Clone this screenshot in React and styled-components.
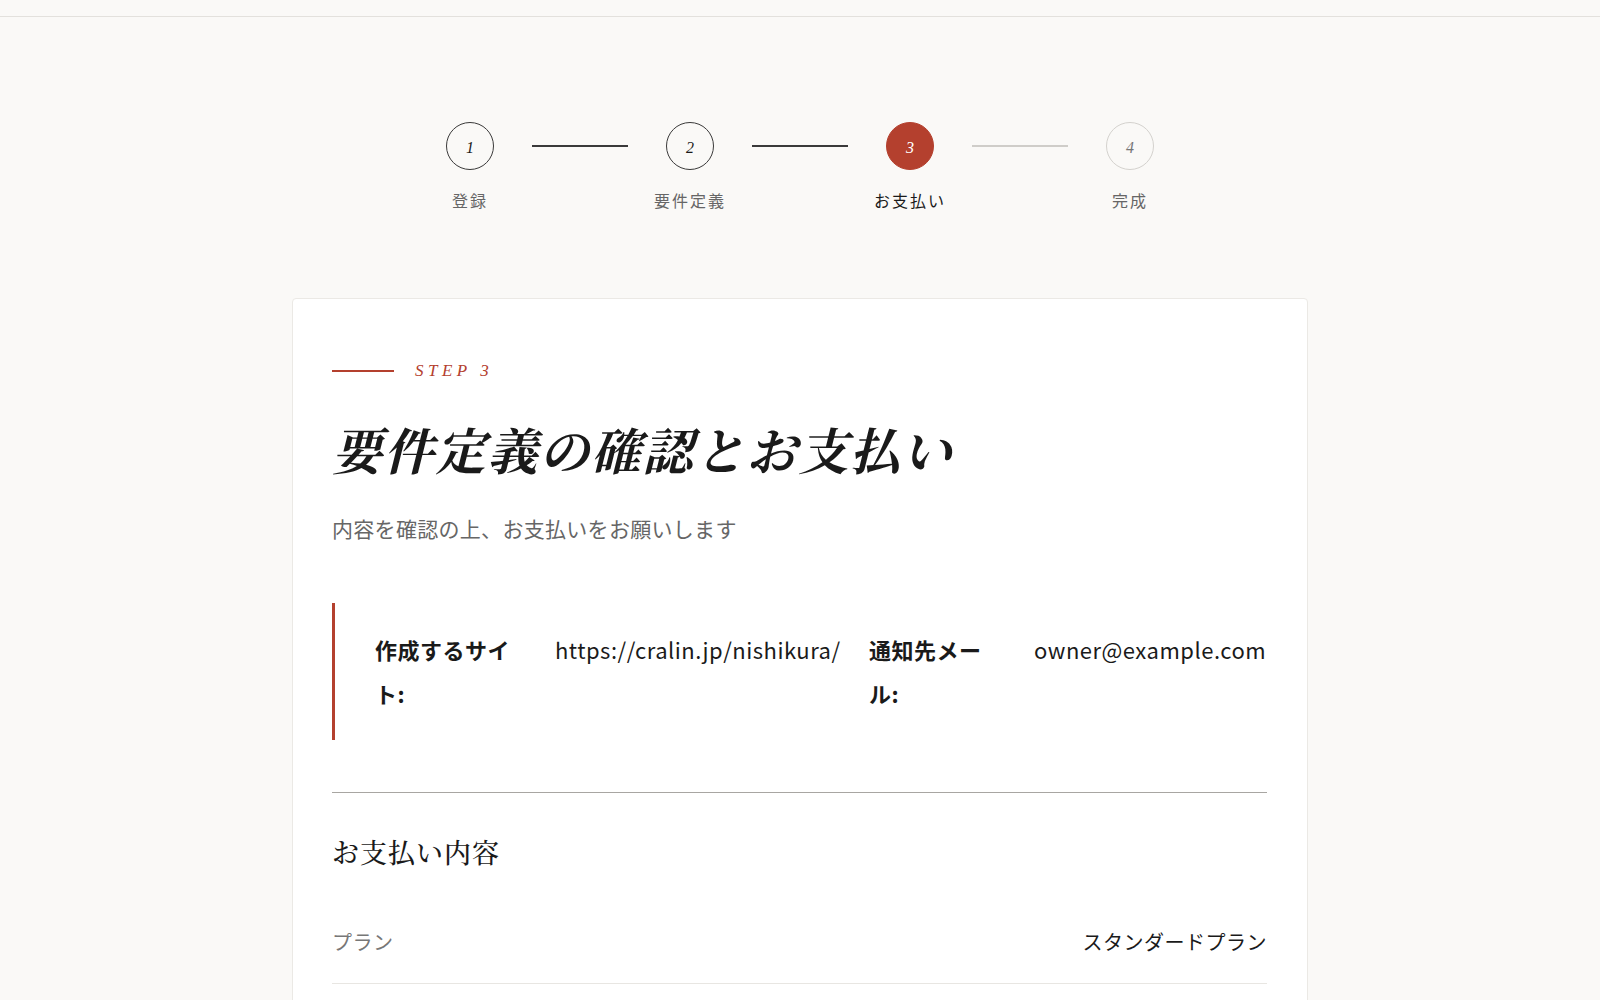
import React from 'react'
import styled, { createGlobalStyle } from 'styled-components'

const sans = `"Noto Sans CJK JP", "Noto Sans", sans-serif`
const serif = `"Noto Serif CJK JP", "Liberation Serif", "Noto Sans CJK JP", serif`
const red = '#b4402e'

const GlobalStyle = createGlobalStyle`
  html, body {
    margin: 0;
    padding: 0;
    background: #faf9f7;
    color: #1a1a1a;
    font-family: ${sans};
  }
  * { box-sizing: border-box; }
`

const TopBar = styled.header`
  height: 17px;
  border-bottom: 1px solid #e3e1dd;
`
const Main = styled.main`
  display: flex;
  flex-direction: column;
  align-items: center;
  padding: 105px 0 0;
`
const Stepper = styled.ol`
  display: flex;
  align-items: flex-start;
  list-style: none;
  margin: 0 0 86px;
  padding: 0;
`
const Step = styled.li`
  width: 80px;
  display: flex;
  flex-direction: column;
  align-items: center;
`
const Circle = styled.div`
  width: 48px;
  height: 48px;
  padding-top: 3px;
  border-radius: 50%;
  display: flex;
  align-items: center;
  justify-content: center;
  font-family: "Liberation Serif", serif;
  font-style: italic;
  font-size: 16px;
  border: 1px solid ${p => (p.$state === 'todo' ? '#d4d2ce' : p.$state === 'active' ? red : '#3a3a3a')};
  background: ${p => (p.$state === 'active' ? red : 'transparent')};
  color: ${p => (p.$state === 'active' ? '#fff' : p.$state === 'todo' ? '#777' : '#1a1a1a')};
`
const StepLabel = styled.span`
  margin-top: 18px;
  font-size: 16px;
  line-height: 24px;
  letter-spacing: 2px;
  white-space: nowrap;
  color: ${p => (p.$active ? '#1a1a1a' : '#666')};
`
const Connector = styled.li`
  width: 96px;
  height: 2px;
  margin: 23px 22px 0;
  background: ${p => (p.$done ? '#3a3a3a' : '#cfcdc9')};
`
const Card = styled.section`
  width: 1016px;
  background: #fff;
  border: 1px solid #ebe9e5;
  border-radius: 4px;
  padding: 56px 40px 64px 39px;
`
const Eyebrow = styled.div`
  display: flex;
  align-items: center;
  gap: 21px;
  height: 32px;
  color: ${red};
  font-family: "Liberation Serif", serif;
  font-style: italic;
  font-size: 17px;
  letter-spacing: 4.5px;
  &::before {
    content: '';
    width: 62px;
    height: 1.5px;
    background: ${red};
  }
`
const Title = styled.h1`
  margin: 26px 0 0;
  font-family: ${serif};
  font-style: italic;
  font-weight: 700;
  font-size: 50px;
  line-height: 70px;
  letter-spacing: 1.8px;
`
const Lead = styled.p`
  margin: 29px 0 0;
  font-size: 21px;
  line-height: 32px;
  color: #666;
  letter-spacing: 0.3px;
`
const Summary = styled.dl`
  margin: 59px 0 0;
  padding: 24px 0 25px 40px;
  border-left: 3px solid ${red};
  display: grid;
  grid-template-columns: 180px 314px 165px 1fr;
  font-size: 22px;
  line-height: 44px;
  letter-spacing: 0.5px;
`
const Term = styled.dt`
  font-weight: 700;
  max-width: ${p => p.$w}px;
`
const Value = styled.dd`
  margin: 0;
  white-space: nowrap;
`
const Divider = styled.hr`
  margin: 52px 0 0;
  border: 0;
  border-top: 1px solid #a8a6a2;
`
const SectionTitle = styled.h2`
  margin: 41px 0 0;
  font-family: ${serif};
  font-weight: 500;
  font-size: 27px;
  line-height: 36px;
  letter-spacing: 1px;
`
const Row = styled.div`
  display: flex;
  justify-content: space-between;
  align-items: center;
  margin-top: 30px;
  padding: 28px 0 27px;
  border-bottom: 1px solid #e8e6e2;
  font-size: 20px;
  line-height: 28px;
  letter-spacing: 0.5px;
`
const RowKey = styled.span`
  color: #777;
`
const RowVal = styled.span`
  color: #1a1a1a;
`

const steps = [
  { n: 1, label: '登録', state: 'done' },
  { n: 2, label: '要件定義', state: 'done' },
  { n: 3, label: 'お支払い', state: 'active' },
  { n: 4, label: '完成', state: 'todo' },
]

export default function App() {
  return (
    <>
      <GlobalStyle />
      <TopBar />
      <Main>
        <Stepper>
          {steps.map((s, i) => (
            <React.Fragment key={s.n}>
              {i > 0 && <Connector $done={steps[i].state !== 'todo'} />}
              <Step>
                <Circle $state={s.state}>{s.n}</Circle>
                <StepLabel $active={s.state === 'active'}>{s.label}</StepLabel>
              </Step>
            </React.Fragment>
          ))}
        </Stepper>
        <Card>
          <Eyebrow>STEP 3</Eyebrow>
          <Title>要件定義の確認とお支払い</Title>
          <Lead>内容を確認の上、お支払いをお願いします</Lead>
          <Summary>
            <Term $w={150}>作成するサイト:</Term>
            <Value>https://cralin.jp/nishikura/</Value>
            <Term $w={125}>通知先メール:</Term>
            <Value>owner@example.com</Value>
          </Summary>
          <Divider />
          <SectionTitle>お支払い内容</SectionTitle>
          <Row>
            <RowKey>プラン</RowKey>
            <RowVal>スタンダードプラン</RowVal>
          </Row>
        </Card>
      </Main>
    </>
  )
}
